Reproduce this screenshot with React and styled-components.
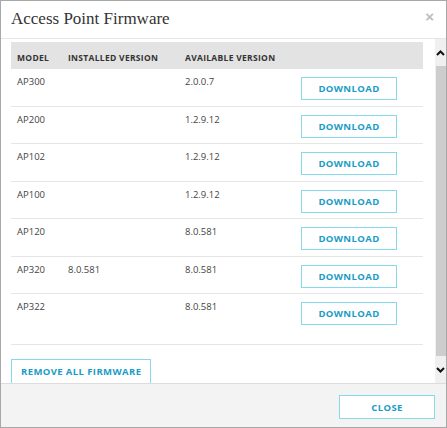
import React from 'react';
import styled, { createGlobalStyle } from 'styled-components';

const GlobalStyle = createGlobalStyle`
  html, body {
    margin: 0;
    padding: 0;
    background: #ffffff;
  }
  * {
    box-sizing: border-box;
  }
`;

const Dialog = styled.section`
  display: flex;
  flex-direction: column;
  width: 447px;
  height: 428px;
  border: 1px solid #a8a8a8;
  background: #ffffff;
  font-family: 'Open Sans', 'Noto Sans', sans-serif;
  color: #444444;
`;

const Header = styled.header`
  display: flex;
  justify-content: space-between;
  align-items: flex-start;
  height: 38px;
  padding: 6px 12px 0 10px;
  border-bottom: 1px solid #e6e6e6;
  flex-shrink: 0;
`;

const Title = styled.h1`
  margin: 0;
  font-family: 'Liberation Serif', 'Times New Roman', serif;
  font-size: 17px;
  font-weight: 400;
  line-height: 24px;
  color: #333333;
`;

const CloseX = styled.span`
  font-family: 'Liberation Sans', Arial, sans-serif;
  font-size: 15px;
  font-weight: 700;
  line-height: 16px;
  margin-top: 2px;
  color: #bdbdbd;
`;

const Body = styled.div`
  display: flex;
  height: 344px;
  flex-shrink: 0;
`;

const Content = styled.div`
  flex: 1;
  overflow: hidden;
  padding: 3px 12px 0 10px;
`;

const Scrollbar = styled.div`
  width: 11px;
  display: flex;
  flex-direction: column;
  align-items: center;
  background: #f0f0f0;
`;

const ArrowBox = styled.div`
  height: 27px;
  width: 100%;
  display: flex;
  align-items: center;
  justify-content: center;
`;

const Thumb = styled.div`
  width: 10px;
  flex: 1;
  background: #cdcdcd;
`;

const Grid = styled.div`
  display: grid;
  grid-template-columns: 51px 117px 116px 96px 1fr;
  padding-left: 6px;
`;

const HeadRow = styled(Grid)`
  height: 27px;
  align-items: center;
  padding-top: 3px;
  background: #e3e3e3;
  font-size: 8.5px;
  font-weight: 700;
  color: #333333;
  letter-spacing: 0.3px;
`;

const Row = styled(Grid)`
  height: ${(p) => (p.$last ? '51px' : '37.5px')};
  align-items: start;
  border-bottom: 1px solid #e6e6e6;
  font-size: 9.5px;
  line-height: 12px;
`;

const Cell = styled.div`
  padding-top: 7px;
`;

const OutlineButton = styled.button`
  width: ${(p) => p.$width || 'auto'};
  height: ${(p) => p.$height || '23px'};
  padding: 0 10px;
  border: 1px solid #86d9ea;
  background: #ffffff;
  font-family: 'Open Sans', 'Noto Sans', sans-serif;
  font-size: 9.5px;
  font-weight: 700;
  letter-spacing: 0.4px;
  color: #1a9cc6;
  cursor: pointer;
`;

const RowButton = styled(OutlineButton)`
  margin-top: 8px;
`;

const RemoveButton = styled(OutlineButton)`
  margin-top: 14px;
  padding: 0 9px 2px;
`;

const Footer = styled.footer`
  flex: 1;
  display: flex;
  justify-content: flex-end;
  align-items: flex-start;
  padding: 11px 11px 0 0;
  background: #f3f3f3;
  border-top: 1px solid #dcdcdc;
`;

const firmware = [
  { model: 'AP300', installed: '', available: '2.0.0.7' },
  { model: 'AP200', installed: '', available: '1.2.9.12' },
  { model: 'AP102', installed: '', available: '1.2.9.12' },
  { model: 'AP100', installed: '', available: '1.2.9.12' },
  { model: 'AP120', installed: '', available: '8.0.581' },
  { model: 'AP320', installed: '8.0.581', available: '8.0.581' },
  { model: 'AP322', installed: '', available: '8.0.581' },
];

const Chevron = ({ up }) => (
  <svg width="9" height="6" viewBox="0 0 9 6">
    <polyline
      points={up ? '1,5 4.5,1.5 8,5' : '1,1 4.5,4.5 8,1'}
      fill="none"
      stroke="#111"
      strokeWidth="2"
    />
  </svg>
);

const App = () => {
  return (
    <React.Fragment>
      <GlobalStyle />
      <Dialog>
        <Header>
          <Title>Access Point Firmware</Title>
          <CloseX>×</CloseX>
        </Header>
        <Body>
          <Content>
            <HeadRow>
              <div>MODEL</div>
              <div>INSTALLED VERSION</div>
              <div>AVAILABLE VERSION</div>
            </HeadRow>
            {firmware.map((f, i) => (
              <Row key={f.model} $last={i === firmware.length - 1}>
                <Cell>{f.model}</Cell>
                <Cell>{f.installed}</Cell>
                <Cell>{f.available}</Cell>
                <RowButton $width="96px">DOWNLOAD</RowButton>
              </Row>
            ))}
            <RemoveButton $height="26px">REMOVE ALL FIRMWARE</RemoveButton>
          </Content>
          <Scrollbar>
            <ArrowBox>
              <Chevron up />
            </ArrowBox>
            <Thumb />
            <ArrowBox>
              <Chevron />
            </ArrowBox>
          </Scrollbar>
        </Body>
        <Footer>
          <OutlineButton $width="96px" $height="24px">CLOSE</OutlineButton>
        </Footer>
      </Dialog>
    </React.Fragment>
  );
};

export default App;
